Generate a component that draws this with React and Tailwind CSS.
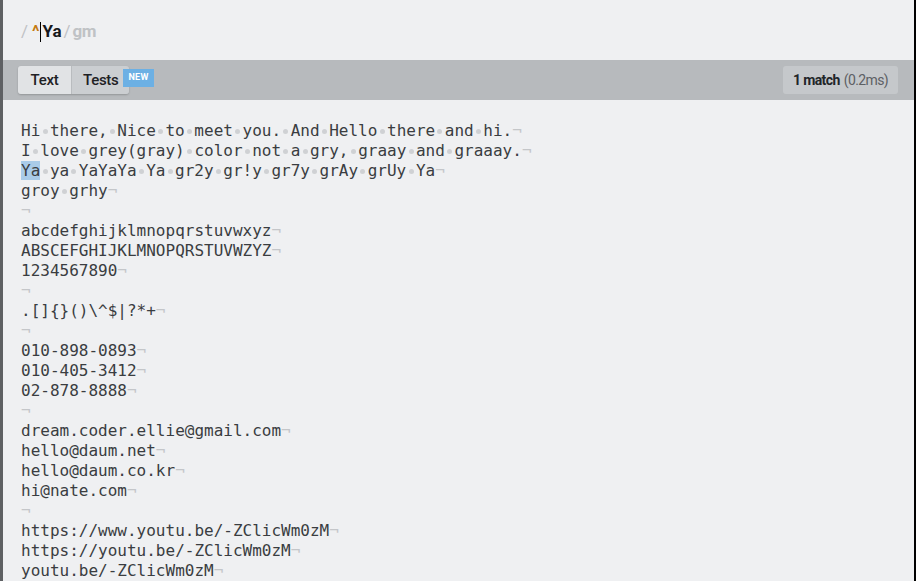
import React from 'react';

const lines = [
  'Hi there, Nice to meet you. And Hello there and hi.',
  'I love grey(gray) color not a gry, graay and graaay.',
  'Ya ya YaYaYa Ya gr2y gr!y gr7y grAy grUy Ya',
  'groy grhy',
  '',
  'abcdefghijklmnopqrstuvwxyz',
  'ABSCEFGHIJKLMNOPQRSTUVWZYZ',
  '1234567890',
  '',
  '.[]{}()\\^$|?*+',
  '',
  '010-898-0893',
  '010-405-3412',
  '02-878-8888',
  '',
  'dream.coder.ellie@gmail.com',
  'hello@daum.net',
  'hello@daum.co.kr',
  'hi@nate.com',
  '',
  'https://www.youtu.be/-ZClicWm0zM',
  'https://youtu.be/-ZClicWm0zM',
  'youtu.be/-ZClicWm0zM',
];

// whitespace marker, one char wide
function Dot() {
  return (
    <span className="inline-flex w-[1ch] items-center justify-center align-middle">
      <span className="h-[5px] w-[5px] rounded-full bg-[#cfd1d4]" />
    </span>
  );
}

function Line({ text, index }) {
  const parts = text.split(' ');
  return (
    <div className="h-5 whitespace-pre">
      {parts.map((p, i) => (
        <React.Fragment key={i}>
          {i > 0 && <Dot />}
          {index === 2 && i === 0 ? (
            <span className="bg-[#a9cbe8]">{p}</span>
          ) : (
            p
          )}
        </React.Fragment>
      ))}
      <span className="text-[#c4c6c9]">¬</span>
    </div>
  );
}

export default function App() {
  return (
    <div className="flex h-[581px] w-[916px] flex-col overflow-hidden border-l-[3px] border-r-2 border-l-[#5e6063] border-r-black bg-[#eff0f2]">
      {/* expression */}
      <div className="flex h-[60px] items-center pl-[18px] pt-[3px] font-['Roboto',sans-serif] text-[17px] font-bold">
        <span className="font-normal text-[#bfc2c5]">/</span>
        <span className="ml-[4px] text-[#c47a10]">^</span>
        <span className="mx-[1px] h-[20px] w-px bg-black" />
        <span className="text-[#17191c]">Ya</span>
        <span className="ml-[2px] font-normal text-[#bfc2c5]">/</span>
        <span className="ml-[2px] tracking-[-0.5px] text-[#bfc2c5]">gm</span>
      </div>

      {/* toolbar */}
      <div className="flex h-[40px] items-center justify-between bg-[#b7babd] pl-[15px] pr-[16px] font-['Roboto',sans-serif]">
        <div className="flex h-[28px] rounded-[3px] shadow-[0_1px_2px_rgba(0,0,0,0.2)]">
          <div className="flex w-[53px] items-center justify-center rounded-l-[3px] bg-[#e1e3e5] text-[15px] font-medium tracking-[-0.3px] text-[#1e2124]">
            Text
          </div>
          <div className="relative flex w-[58px] items-center rounded-r-[3px] border-l border-[#b9bcbf] bg-[#cbced1] pl-[11px] text-[15px] font-medium tracking-[-0.3px] text-[#1e2124]">
            Tests
            <span className="absolute left-[51px] top-[3px] flex h-[18px] w-[31px] items-center justify-center bg-[#6cb0e4] text-[9px] font-bold tracking-wide text-white">
              NEW
            </span>
          </div>
        </div>
        <div className="flex h-[28px] w-[115px] items-center justify-center rounded-[3px] bg-[#c5c8cb] text-[14px] tracking-[-0.6px]">
          <span className="font-bold text-[#222529]">1 match</span>
          <span className="ml-[4px] text-[#5d6064]">(0.2ms)</span>
        </div>
      </div>

      {/* text body */}
      <div className="pl-[18px] pt-[21px] font-['DejaVu_Sans_Mono',monospace] text-[16px] leading-5 text-[#3a3d41]">
        {lines.map((l, i) => (
          <Line key={i} text={l} index={i} />
        ))}
      </div>
    </div>
  );
}
